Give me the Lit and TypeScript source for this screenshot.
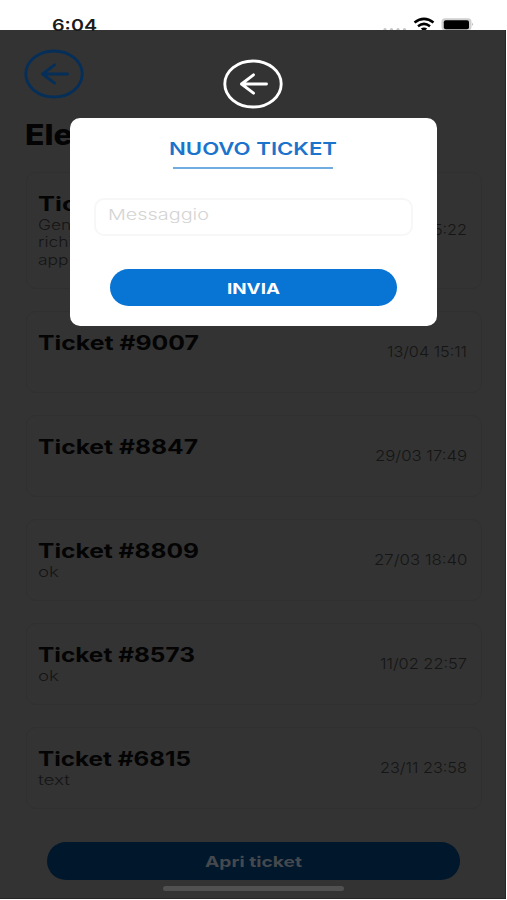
import { LitElement, html, css, svg, nothing } from "lit";
import { customElement, property } from "lit/decorators.js";

/** A line of text whose glyphs are widened to fill a given width. */
@customElement("wide-text")
class WideText extends LitElement {
  @property({ type: Number }) width = 0;
  @property({ type: Number }) scale = 1.2;

  static styles = css`
    :host { display: block; white-space: nowrap; flex: none; }
    .glyphs { display: inline-block; transform-origin: 0 50%; vertical-align: top; }
  `;

  render() {
    return html`<span class="glyphs"><slot></slot></span>`;
  }

  updated() {
    const span = this.renderRoot.querySelector(".glyphs") as HTMLElement;
    span.style.transform = "none";
    const natural = span.getBoundingClientRect().width;
    const factor = this.width && natural ? this.width / natural : this.scale;
    span.style.transform = `scaleX(${factor})`;
    if (this.width) this.style.width = `${this.width}px`;
  }
}

@customElement("back-button")
class BackButton extends LitElement {
  static styles = css`
    :host { display: block; width: 60px; height: 50px; }
    .icon { display: block; }
  `;
  render() {
    return html`<svg class="icon" width="60" height="50" viewBox="0 0 60 50" fill="none"
      stroke="currentColor" stroke-width="2.9" stroke-linecap="round" stroke-linejoin="round">
      <ellipse cx="30" cy="25" rx="28.2" ry="23"></ellipse>
      <path d="M43.5 25H18.500M30.500 15.800L18.500 25L30.500 34.200"></path>
    </svg>`;
  }
}

interface Ticket {
  title: string;
  titleWidth: number;
  lines: { text: string; width?: number }[];
  date: string;
  dateWidth: number;
}

const tickets: Ticket[] = [
  {
    title: "Ticket #9012", titleWidth: 161,
    lines: [{ text: "Generica" }, { text: "richiesta" }, { text: "app" }],
    date: "13/04 15:22", dateWidth: 87,
  },
  { title: "Ticket #9007", titleWidth: 161, lines: [], date: "13/04 15:11", dateWidth: 80 },
  { title: "Ticket #8847", titleWidth: 160, lines: [], date: "29/03 17:49", dateWidth: 92 },
  { title: "Ticket #8809", titleWidth: 161, lines: [{ text: "ok", width: 21 }], date: "27/03 18:40", dateWidth: 93.5 },
  { title: "Ticket #8573", titleWidth: 157, lines: [{ text: "ok", width: 21 }], date: "11/02 22:57", dateWidth: 87 },
  { title: "Ticket #6815", titleWidth: 153, lines: [{ text: "text", width: 32 }], date: "23/11 23:58", dateWidth: 87 },
];

@customElement("ticket-card")
class TicketCard extends LitElement {
  @property({ attribute: false }) ticket!: Ticket;

  static styles = css`
    :host { display: block; }
    .card {
      box-sizing: border-box; min-height: 82px; padding: 19px 14px 19px 11px;
      border: 1px solid #303030; border-radius: 10px;
      display: flex; justify-content: space-between; align-items: center;
    }
    .body { align-self: flex-start; }
    .title { font-size: 19.5px; line-height: 24px; font-weight: 700; color: #040404; }
    .line { font-size: 14.5px; line-height: 17.7px; font-weight: 300; color: #151515; }
    .date { font-size: 15px; line-height: 18px; font-weight: 300; color: #151515; }
  `;

  render() {
    const t = this.ticket;
    return html`<div class="card">
      <div class="body">
        <wide-text class="title" width=${t.titleWidth}>${t.title}</wide-text>
        ${t.lines.map((l) => html`<wide-text class="line" width=${l.width ?? nothing}>${l.text}</wide-text>`)}
      </div>
      <wide-text class="date" width=${t.dateWidth}>${t.date}</wide-text>
    </div>`;
  }
}

@customElement("app-root")
class AppRoot extends LitElement {
  static styles = css`
    :host {
      display: block; position: relative; width: 507px; height: 900px; overflow: hidden;
      background: #fff; font-family: Inter, "Open Sans", sans-serif;
    }
    .status {
      box-sizing: border-box; height: 30px; padding: 12.5px 33px 0 52px;
      display: flex; justify-content: space-between; align-items: flex-start;
    }
    .time { font-size: 16px; line-height: 24px; font-weight: 600; color: #1b1b1b; }
    .icons { display: block; flex: none; }
    .screen {
      box-sizing: border-box; width: 505.7px; height: 868.8px; background: #333;
      padding: 18.5px 24px 0; border-right: 1px solid #262626; border-bottom: 1px solid #262626;
      display: flex; flex-direction: column;
    }
    .back { color: #052f59; }
    .heading { margin: 18.5px 0 0 1px; font-size: 28px; line-height: 36px; font-weight: 800; color: #040404; }
    .list { display: flex; flex-direction: column; gap: 22px; margin: 18.5px 0 0 2px; width: 456px; }
    .open {
      box-sizing: border-box; padding-top: 2px;
      margin: 33px 0 0 23px; width: 413px; height: 38px; border-radius: 19px; background: #00172c;
      display: flex; align-items: center; justify-content: center; flex: none;
      font-size: 14.5px; line-height: 20px; font-weight: 700; color: #45494d;
    }
    .home { margin: 6.5px 0 0 139px; width: 181px; height: 4.5px; border-radius: 3px; background: #515151; flex: none; }
    .overlay {
      position: absolute; left: 70px; top: 58.5px; width: 366.5px;
      display: flex; flex-direction: column; align-items: center;
    }
    .close { color: #fff; }
    .dialog {
      box-sizing: border-box; width: 366.5px; height: 208.5px; margin-top: 9px; padding-top: 20px;
      border-radius: 10px; background: #fff; display: flex; flex-direction: column; align-items: center;
    }
    .caption { font-size: 17.5px; line-height: 22px; font-weight: 600; color: #1c73cc; }
    .rule { width: 160px; height: 1.7px; margin-top: 7.6px; background: #70abe2; }
    .field {
      box-sizing: border-box; width: 319px; height: 38px; margin-top: 29px; padding: 5px 0 0 12px;
      border: 2px solid #f7f7f7; border-radius: 10px;
      font-size: 15px; line-height: 20px; font-weight: 300; color: #d4d4d4;
    }
    .send {
      box-sizing: border-box; width: 287px; height: 37px; margin-top: 33px; padding-top: 3px;
      border-radius: 19px; background: #0874d4;
      display: flex; align-items: center; justify-content: center;
      font-size: 14.5px; line-height: 20px; font-weight: 700; color: #fff;
    }
  `;

  private statusIcons() {
    return html`<svg class="icons" width="92" height="17.5" viewBox="0 0 92 17.5">
      ${[3, 9.5, 16, 22.5].map((x) => svg`<circle cx=${x} cy="16.5" r="1.6" fill="#c4c4c4"></circle>`)}
      <g fill="none" stroke="#000" stroke-width="2.5">
        <path d="M32.500 9.500Q42 2.300 51.500 9.500"></path>
        <path d="M36 13.200Q42 8.500 48 13.200"></path>
      </g>
      <path d="M38.800 15.600Q42 13.400 45.200 15.600L42 18.500Z" fill="#000"></path>
      <rect x="59.500" y="5.200" width="30" height="12.300" rx="3.500" fill="#d0d0d0"></rect>
      <rect x="61.800" y="7.200" width="25.200" height="9" rx="2" fill="#000"></rect>
      <path d="M90.300 9.700Q92 11.300 90.300 13Z" fill="#999"></path>
    </svg>`;
  }

  render() {
    return html`
      <div class="status">
        <wide-text class="time" width="45">6:04</wide-text>
        ${this.statusIcons()}
      </div>
      <div class="screen">
        <back-button class="back"></back-button>
        <wide-text class="heading" scale="1.14">Elenco</wide-text>
        <div class="list">
          ${tickets.map((t) => html`<ticket-card .ticket=${t}></ticket-card>`)}
        </div>
        <div class="open"><wide-text width="97">Apri ticket</wide-text></div>
        <div class="home"></div>
      </div>
      <div class="overlay">
        <back-button class="close"></back-button>
        <div class="dialog">
          <wide-text class="caption" width="168">NUOVO TICKET</wide-text>
          <div class="rule"></div>
          <div class="field"><wide-text width="101">Messaggio</wide-text></div>
          <div class="send"><wide-text width="53">INVIA</wide-text></div>
        </div>
      </div>
    `;
  }
}
